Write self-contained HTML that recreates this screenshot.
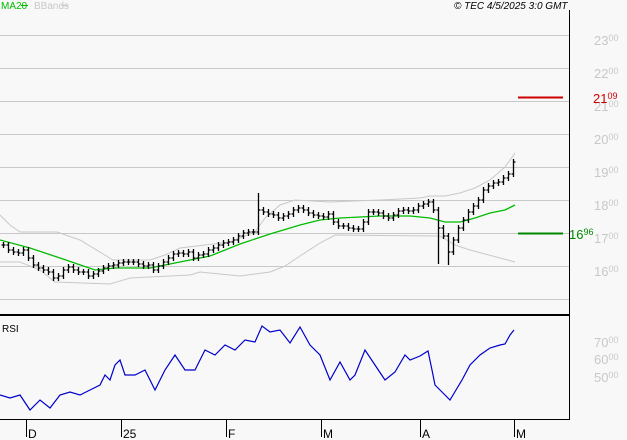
<!DOCTYPE html>
<html><head><meta charset="utf-8"><style>
html,body{margin:0;padding:0;background:#f8f8f8;width:627px;height:440px;overflow:hidden}
svg{display:block}
text{font-family:"Liberation Sans",sans-serif}
</style></head><body>
<svg id="s" width="627" height="440" xmlns="http://www.w3.org/2000/svg">
<rect width="627" height="440" fill="#f8f8f8"/>
<g stroke="#c8c8c8" stroke-width="1">
<line x1="0" y1="35.5" x2="569" y2="35.5"/><line x1="0" y1="68.5" x2="569" y2="68.5"/>
<line x1="0" y1="101.5" x2="569" y2="101.5"/><line x1="0" y1="134.5" x2="569" y2="134.5"/>
<line x1="0" y1="167.5" x2="569" y2="167.5"/><line x1="0" y1="200.5" x2="569" y2="200.5"/>
<line x1="0" y1="233.5" x2="569" y2="233.5"/><line x1="0" y1="266.5" x2="569" y2="266.5"/>
<line x1="0" y1="299.5" x2="569" y2="299.5"/>
</g>
<g fill="#c8c8c8" font-size="13">
<text x="594" y="45">23<tspan font-size="9" dy="-4">00</tspan></text>
<text x="594" y="78">22<tspan font-size="9" dy="-4">00</tspan></text>
<text x="594" y="111">21<tspan font-size="9" dy="-4">00</tspan></text>
<text x="594" y="144">20<tspan font-size="9" dy="-4">00</tspan></text>
<text x="594" y="177">19<tspan font-size="9" dy="-4">00</tspan></text>
<text x="594" y="210">18<tspan font-size="9" dy="-4">00</tspan></text>
<text x="594" y="243">17<tspan font-size="9" dy="-4">00</tspan></text>
<text x="594" y="276">16<tspan font-size="9" dy="-4">00</tspan></text>
<text x="594" y="347">70<tspan font-size="9" dy="-4">00</tspan></text>
<text x="594" y="364">60<tspan font-size="9" dy="-4">00</tspan></text>
<text x="594" y="382">50<tspan font-size="9" dy="-4">00</tspan></text>
</g>
<polyline fill="none" stroke="#c8c8c8" points="0,215 10,225 20,232 40,232 57,232 80,240 113,260 150,260 165,255 180,248 230,242 255,232 265,218 280,205 295,200 330,202 380,200 420,198 430,196 445,196 460,193 475,188 490,180 505,167 515,153"/>
<polyline fill="none" stroke="#c8c8c8" points="0,262 20,262 40,270 55,282 110,284 130,278 190,275 200,272 240,276 270,272 285,266 300,256 320,243 335,235 440,236 455,245 470,250 515,262"/>
<polyline fill="none" stroke="#00bb00" stroke-width="1.3" points="0,240 30,248 60,258 95,270 115,268 150,268 180,262 210,256 240,244 270,234 300,225 320,220 340,218 380,216 410,216 430,218 445,222 460,222 475,218 490,213 505,210 515,205"/>
<path id="bars" fill="none" stroke="#000" stroke-width="1.3"/>
<line x1="518" y1="97.5" x2="563" y2="97.5" stroke="#cc0000" stroke-width="2"/>
<text x="593" y="103" fill="#cc0000" font-size="13">21<tspan font-size="9" dy="-4">09</tspan></text>
<line x1="518" y1="233.5" x2="563" y2="233.5" stroke="#008800" stroke-width="2"/>
<text x="569" y="239" fill="#008800" font-size="13">16<tspan font-size="9" dy="-4">96</tspan></text>
<polyline fill="none" stroke="#0000cc" stroke-width="1.2" points="0,395 10,398 20,395 30,410 40,400 50,408 60,395 70,392 80,395 90,390 100,385 105,375 110,380 115,365 120,360 125,375 135,375 145,370 155,390 165,370 175,355 185,370 195,370 205,350 215,355 225,345 235,350 245,340 255,342 262,326 270,332 280,330 290,343 300,327 310,345 320,355 330,380 340,362 350,380 355,375 365,350 375,365 385,380 395,372 405,355 410,360 420,356 428,351 432,370 435,385 440,390 445,395 450,400 456,390 462,380 470,365 480,355 490,348 500,345 505,344 510,335 514,330"/>
<line x1="569.5" y1="10" x2="569.5" y2="420" stroke="#000"/>
<line x1="0" y1="315" x2="570" y2="315" stroke="#000" stroke-width="2"/>
<line x1="0" y1="419.5" x2="570" y2="419.5" stroke="#000"/>
<g stroke="#000"><line x1="26.5" y1="419" x2="26.5" y2="437"/><line x1="121.5" y1="419" x2="121.5" y2="437"/><line x1="226.5" y1="419" x2="226.5" y2="437"/><line x1="321.5" y1="419" x2="321.5" y2="437"/><line x1="420.5" y1="419" x2="420.5" y2="437"/><line x1="514.5" y1="419" x2="514.5" y2="437"/></g>
<g font-size="12" fill="#000">
<text x="28" y="438">D</text><text x="123" y="438">25</text><text x="228" y="438">F</text><text x="323" y="438">M</text><text x="422" y="438">A</text><text x="516" y="438">M</text>
<text x="2" y="332" font-size="10">RSI</text>
</g>
<text x="1" y="9" font-size="10" fill="#00bb00">MA20</text>
<line x1="21" y1="5.5" x2="28" y2="5.5" stroke="#00bb00"/>
<text x="34" y="9" font-size="10" fill="#c8c8c8">BBands</text>
<line x1="61" y1="5.5" x2="68" y2="5.5" stroke="#c8c8c8"/>
<text x="454" y="9" font-size="10" font-style="italic" fill="#000">© TEC 4/5/2025 3:0 GMT</text>
</svg>
<script>
var c=[245,250,252,253,250,258,265,268,270,272,278,276,270,267,270,272,272,276,274,271,268,266,265,263,262,262,262,264,266,265,270,266,262,258,254,253,254,252,258,255,254,250,248,245,243,242,240,236,233,232,232,210,212,214,215,218,216,214,210,208,210,213,215,216,217,214,222,226,226,228,229,229,222,212,212,213,216,218,215,211,210,211,210,206,204,202,210,228,236,252,240,228,220,212,206,200,190,186,183,182,178,174,162];
var d="",p=c[0];
for(var i=0;i<c.length;i++){var x=3+i*5+.5,y=c[i],o=p,h=Math.min(o,y)-3,l=Math.max(o,y)+3;
if(i==51){h=193;}if(i==89){l=265;}if(i==87){l=264;}
d+="M"+x+" "+h+"V"+l+"M"+(x-2)+" "+o+"h2M"+x+" "+y+"h2";p=y;}
document.getElementById("bars").setAttribute("d",d);
</script>
</body></html>
